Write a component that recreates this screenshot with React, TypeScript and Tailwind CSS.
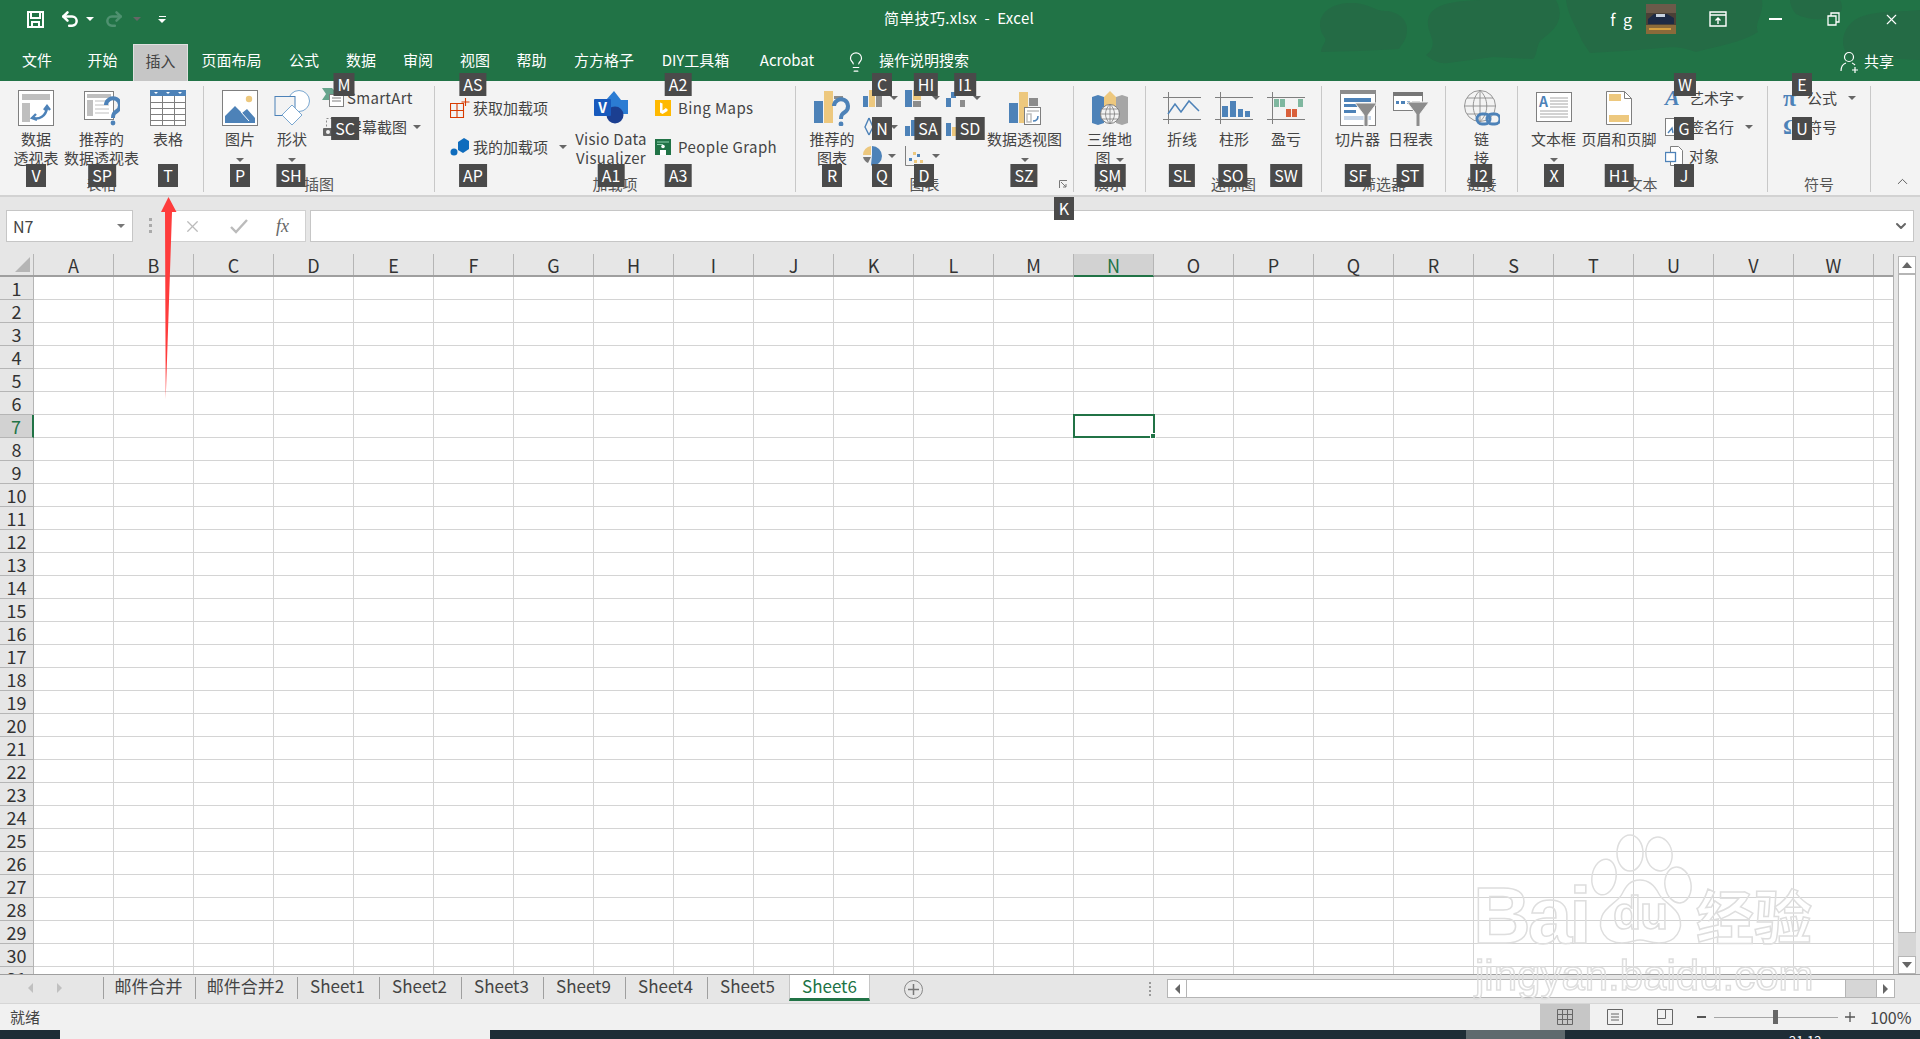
import type { ReactNode } from "react";
import { ChevronDown, ChevronUp, Lightbulb, Redo2, Undo2, X } from "lucide-react";

const BLUE = "#4d82b8";
const TAN = "#edc87e";
const GRAY = "#8c8c8c";
const LINE = "#7f7f7f";

const COLS = "ABCDEFGHIJKLMNOPQRSTUVWX".split("");
const ROWS = Array.from({ length: 31 }, (_, i) => i + 1);

const TABS = [
  { label: "文件", w: "w-[70px]" },
  { label: "开始", w: "w-[61px]" },
  { label: "插入", w: "w-[55px]", active: true },
  { label: "页面布局", w: "w-[87px]" },
  { label: "公式", w: "w-[58px]" },
  { label: "数据", w: "w-[56px]" },
  { label: "审阅", w: "w-[58px]" },
  { label: "视图", w: "w-[56px]" },
  { label: "帮助", w: "w-[57px]" },
  { label: "方方格子", w: "w-[88px]" },
  { label: "DIY工具箱", w: "w-[95px]" },
  { label: "Acrobat", w: "w-[88px]" },
];

const SHEETS = [
  { name: "邮件合并", w: "w-[92px]" },
  { name: "邮件合并2", w: "w-[102px]" },
  { name: "Sheet1", w: "w-[82px]" },
  { name: "Sheet2", w: "w-[82px]" },
  { name: "Sheet3", w: "w-[82px]" },
  { name: "Sheet9", w: "w-[82px]" },
  { name: "Sheet4", w: "w-[82px]" },
  { name: "Sheet5", w: "w-[82px]" },
];

// keytips float above the ribbon while Alt is held
const KEYTIPS = [
  { t: "M", c: "left-[344px] top-[73px]" },
  { t: "AS", c: "left-[473px] top-[73px]" },
  { t: "A2", c: "left-[678px] top-[73px]" },
  { t: "C", c: "left-[882px] top-[73px]" },
  { t: "HI", c: "left-[926px] top-[73px]" },
  { t: "I1", c: "left-[965px] top-[73px]" },
  { t: "W", c: "left-[1685px] top-[73px]" },
  { t: "E", c: "left-[1802px] top-[73px]" },
  { t: "SC", c: "left-[345px] top-[117px]" },
  { t: "N", c: "left-[882px] top-[117px]" },
  { t: "SA", c: "left-[928px] top-[117px]" },
  { t: "SD", c: "left-[970px] top-[117px]" },
  { t: "G", c: "left-[1684px] top-[117px]" },
  { t: "U", c: "left-[1802px] top-[117px]" },
  { t: "V", c: "left-[36px] top-[164px]" },
  { t: "SP", c: "left-[102px] top-[164px]" },
  { t: "T", c: "left-[168px] top-[164px]" },
  { t: "P", c: "left-[240px] top-[164px]" },
  { t: "SH", c: "left-[291px] top-[164px]" },
  { t: "AP", c: "left-[473px] top-[164px]" },
  { t: "A1", c: "left-[611px] top-[164px]" },
  { t: "A3", c: "left-[678px] top-[164px]" },
  { t: "R", c: "left-[832px] top-[164px]" },
  { t: "Q", c: "left-[882px] top-[164px]" },
  { t: "D", c: "left-[924px] top-[164px]" },
  { t: "SZ", c: "left-[1024px] top-[164px]" },
  { t: "SM", c: "left-[1110px] top-[164px]" },
  { t: "SL", c: "left-[1182px] top-[164px]" },
  { t: "SO", c: "left-[1233px] top-[164px]" },
  { t: "SW", c: "left-[1286px] top-[164px]" },
  { t: "SF", c: "left-[1358px] top-[164px]" },
  { t: "ST", c: "left-[1410px] top-[164px]" },
  { t: "I2", c: "left-[1481px] top-[164px]" },
  { t: "X", c: "left-[1554px] top-[164px]" },
  { t: "H1", c: "left-[1619px] top-[164px]" },
  { t: "J", c: "left-[1684px] top-[164px]" },
  { t: "K", c: "left-[1064px] top-[197px]" },
];

function Caret({ className = "" }: { className?: string }) {
  return (
    <span
      className={`inline-block h-0 w-0 border-x-[4px] border-t-[4px] border-x-transparent border-t-[#666] ${className}`}
    />
  );
}

function Ic({ w = 36, h = 36, children }: { w?: number; h?: number; children: ReactNode }) {
  return (
    <svg width={w} height={h} viewBox={`0 0 ${w} ${h}`} fill="none" className="shrink-0">
      {children}
    </svg>
  );
}

function Question({ x, y }: { x: number; y: number }) {
  return (
    <g transform={`translate(${x} ${y})`}>
      <path d="M2 7a7 7 0 1 1 11 6c-3 2-4 3-4 7" stroke={BLUE} strokeWidth="4" fill="none" />
      <circle cx="9" cy="25" r="2.4" fill={BLUE} />
    </g>
  );
}

function Funnel({ x, y }: { x: number; y: number }) {
  return <path transform={`translate(${x} ${y})`} d="M0 0h22L13 12v14h-4V12z" fill={GRAY} stroke="#f3f3f3" />;
}

function Big({
  w,
  lines,
  caret,
  inlineCaret,
  textClass = "",
  children,
}: {
  w: string;
  lines: string[];
  caret?: boolean;
  inlineCaret?: boolean;
  textClass?: string;
  children: ReactNode;
}) {
  return (
    <div className={`flex shrink-0 flex-col items-center ${w}`}>
      <div className="flex h-[43px] items-center justify-center">{children}</div>
      {lines.map((l, i) => (
        <div key={l} className={`h-[19px] whitespace-nowrap text-[15px] leading-[19px] ${textClass}`}>
          {l}
          {inlineCaret && i === lines.length - 1 && <Caret className="mb-[2px] ml-[5px]" />}
        </div>
      ))}
      {caret && (
        <div className="flex h-[21px] items-center pt-[2px]">
          <Caret />
        </div>
      )}
    </div>
  );
}

function Small({
  slot,
  icon,
  text,
  caretClass,
  textClass = "",
}: {
  slot: string;
  icon: ReactNode;
  text: string;
  caretClass?: string;
  textClass?: string;
}) {
  return (
    <div className="flex h-[24px] items-center whitespace-nowrap text-[15px]">
      <span className={`flex shrink-0 items-center ${slot}`}>{icon}</span>
      <span className={textClass}>{text}</span>
      {caretClass && <Caret className={caretClass} />}
    </div>
  );
}

function Group({
  w,
  label,
  labelClass = "",
  contentClass = "",
  children,
}: {
  w: string;
  label: string;
  labelClass?: string;
  contentClass?: string;
  children: ReactNode;
}) {
  return (
    <div className={`relative flex h-[106px] shrink-0 flex-col border-r border-[#c8c8c8] ${w}`}>
      <div className={`flex h-[93px] ${contentClass}`}>{children}</div>
      <div className={`text-center text-[15px] leading-[16px] text-[#555] ${labelClass}`}>{label}</div>
    </div>
  );
}

function ChartCell({ children }: { children: ReactNode }) {
  return (
    <div className="flex h-[24px] w-[41.5px] items-center">
      {children}
      <Caret className="ml-[5px]" />
    </div>
  );
}

function TitleBar() {
  return (
    <div className="relative h-[81px] shrink-0 overflow-hidden bg-[#217346] text-white">
      <svg className="absolute left-0 top-0" width="1920" height="81" fill="#246b45">
        <path d="M1320 25c0-15 15-23 35-22 15 1 20 8 30 8 12 0 22 8 22 18 0 12-5 14-8 20l-40 2-38 1c1-8 6-10 4-14-3-4-5-8-5-13z" />
        <path d="M1428 20c2-14 20-20 60-20h68c10 20-2 30-15 40-5 5-3 14-8 19l-40-2-45 6c-8 1-15-2-22-8 6-4 8-10 6-16-2-7-5-12-4-19z" />
        <path d="M1566 0h196c2 15-8 22-4 32-15 10-40 14-62 20-12-4-18-6-36-4-20 2-50 4-70 5l-8-12c-6-15-14-25-16-41z" />
        <path d="M1790 0h50c2 4 4 10-2 14-14 8-30 6-42 0-4-4-6-10-6-14z" />
        <path d="M1843 42c0-12 8-22 20-26 20-6 42-4 57-6v50l-40-2-30 2c-2-6-7-10-7-18z" />
      </svg>
      <div className="relative flex h-[43px] items-center pb-[5px]">
        <div className="flex items-center">
          <svg className="ml-[27px]" width="17" height="17" viewBox="0 0 17 17" fill="none" stroke="#fff" strokeWidth="2">
            <path d="M1 1h15v15H1z" />
            <path d="M4 1v6h9V1M5 16v-5h7v5" />
          </svg>
          <Undo2 className="ml-[16px]" size={20} strokeWidth={3} />
          <Caret className="ml-[6px] border-t-white" />
          <Redo2 className="ml-[10px] text-[#4f9170]" size={20} strokeWidth={3} />
          <Caret className="ml-[9px] border-t-[#4f9170]" />
          <span className="ml-[17px] flex flex-col items-center gap-[2px]">
            <span className="h-[1px] w-[7px] bg-white" />
            <Caret className="border-t-white" />
          </span>
        </div>
        <div className="absolute left-[884px] top-[8px] whitespace-nowrap text-[15px] leading-[20px] tracking-[0.3px]">
          简单技巧.xlsx&nbsp;&nbsp;-&nbsp;&nbsp;Excel
        </div>
        <div className="ml-auto flex items-center">
          <span className="text-[16px] tracking-[2px]">f g</span>
          <svg className="ml-[12px]" width="30" height="30" viewBox="0 0 30 30">
            <rect width="30" height="30" fill="#4a4036" />
            <rect width="30" height="9" fill="#6b5a4a" />
            <path d="M2 15l6-5h13l7 4v6H2z" fill="#1d2a45" />
            <rect x="10" y="10" width="9" height="3" fill="#c8d2e0" />
            <rect y="21" width="30" height="9" fill="#8a6a3a" />
            <rect x="3" y="24" width="22" height="2" fill="#d6a040" />
          </svg>
          <svg className="ml-[33px]" width="18" height="16" viewBox="0 0 18 16" fill="none" stroke="#fff" strokeWidth="1.4">
            <path d="M1 1h16v14H1zM1 4h16M9 13V7M6.500 9.500 9 7l2.500 2.500" />
          </svg>
          <span className="ml-[42px] h-[1.5px] w-[13px] bg-white" />
          <svg className="ml-[45px]" width="13" height="14" viewBox="0 0 13 14" fill="none" stroke="#fff" strokeWidth="1.3">
            <path d="M1 4h8v9H1zM4 4V1h8v9H9" />
          </svg>
          <X className="ml-[43px] mr-[20px]" size={17} strokeWidth={1.6} />
        </div>
      </div>
      <div className="relative flex h-[38px] items-center pb-[1px] pl-[2px] text-[15px]">
        {TABS.map((t) => (
          <div
            key={t.label}
            className={`flex h-full items-center justify-center pb-[2px] ${t.w} ${
              t.active ? "-mb-[1px] h-[38px] border-x border-t border-[#e0e0e0] bg-[#c6c6c6] text-[#444]" : ""
            }`}
          >
            {t.label}
          </div>
        ))}
        <Lightbulb className="ml-[14px] mr-[12px]" size={22} strokeWidth={1.3} />
        <span className="mb-[2px]">操作说明搜索</span>
        <svg className="ml-auto" width="20" height="22" viewBox="0 0 20 22" fill="none" stroke="#fff" strokeWidth="1.2">
          <circle cx="9" cy="6" r="4.500" />
          <path d="M1 20c0-5 2-7 5-8M12 12c1 .4 2 1 3 2M15 16v6M12 19h6" />
        </svg>
        <span className="ml-[4px] mr-[26px]">共享</span>
      </div>
    </div>
  );
}

function Ribbon() {
  return (
    <div className="flex h-[116px] shrink-0 border-b-2 border-[#d2d2d2] bg-[#f3f3f3] pt-[5px] text-[#444]">
      <Group w="w-[204px]" label="表格" contentClass="pl-[3px]">
        <Big w="w-[66px]" lines={["数据", "透视表"]}>
          <Ic>
            <rect x="0.500" y="0.500" width="35" height="35" fill="#fff" stroke={LINE} />
            <rect x="4" y="4" width="28" height="6" fill="#bfbfbf" />
            <rect x="4" y="13" width="8" height="19" fill="#bfbfbf" />
            <path d="M15 28c6 2 13-2 14-10M26 20l3-4 3 4M18 24l-4 4 5 2" stroke={BLUE} strokeWidth="2.400" />
          </Ic>
        </Big>
        <Big w="w-[65px]" lines={["推荐的", "数据透视表"]}>
          <Ic>
            <rect x="0.500" y="1.500" width="29" height="28" fill="#fff" stroke={LINE} />
            <rect x="3" y="4" width="24" height="4" fill="#bfbfbf" />
            <rect x="3" y="10" width="6" height="16" fill="#bfbfbf" />
            <path d="M11 11h14M11 15h14M11 19h14M11 23h14" stroke="#bfbfbf" />
            <Question x={20} y={8} />
          </Ic>
        </Big>
        <Big w="w-[68px]" lines={["表格"]}>
          <Ic>
            <rect x="0.500" y="0.500" width="35" height="35" fill="#fff" stroke={LINE} />
            <rect width="36" height="6" fill={BLUE} />
            <path d="M0.500 12.500h35M0.500 18.500h35M0.500 24.500h35M0.500 30.500h35M12.500 6v30M24.500 6v30" stroke={LINE} />
            <path d="M4 2l2 2 2-2zM16 2l2 2 2-2zM28 2l2 2 2-2z" fill="#fff" />
          </Ic>
        </Big>
      </Group>

      <Group w="w-[231px]" label="插图" contentClass="pl-[10px]">
        <Big w="w-[52px]" lines={["图片"]} caret>
          <Ic>
            <rect x="0.500" y="0.500" width="35" height="35" fill="#fff" stroke={LINE} />
            <circle cx="27" cy="9" r="3.200" fill={TAN} />
            <path d="M3 33V26l10-10 7 7 5-4 8 9v5z" fill={BLUE} />
            <path d="M19 22l8 9" stroke="#fff" />
          </Ic>
        </Big>
        <Big w="w-[52px]" lines={["形状"]} caret>
          <Ic>
            <circle cx="25" cy="11" r="10.500" fill="#fff" stroke="#7aa7d0" />
            <rect x="1" y="6.500" width="20" height="19" fill="#f3f3f3" stroke={BLUE} />
            <path d="M18 15l10 10-10 10-10-10z" fill="#fff" stroke="#7aa7d0" />
          </Ic>
        </Big>
        <div className="flex flex-col gap-[5px] pl-[4px]">
          <Small
            slot="w-[25px]"
            text="SmartArt"
            textClass="tracking-[0.3px]"
            icon={
              <Ic w={22} h={20}>
                <path d="M0 0h10l6 6-6 6H0l4-6z" fill="#66a48c" />
                <rect x="7.500" y="6.500" width="14" height="12" fill="#fff" stroke={LINE} />
                <path d="M10 10h9M10 13h9" stroke={LINE} />
              </Ic>
            }
          />
          <Small
            slot="w-[25px]"
            text="屏幕截图"
            caretClass="ml-[6px]"
            icon={
              <Ic w={22} h={20}>
                <rect x="4.500" y="1.500" width="14" height="12" stroke={GRAY} strokeDasharray="2 2" />
                <rect x="1" y="11" width="10" height="8" rx="1" fill="#666" />
                <circle cx="6" cy="15" r="2" fill="#f3f3f3" />
              </Ic>
            }
          />
        </div>
      </Group>

      <Group w="w-[361px]" label="加载项" contentClass="pl-[15px]">
        <div className="flex w-[121px] shrink-0 flex-col gap-[15px] pt-[10px]">
          <Small
            slot="w-[23px]"
            text="获取加载项"
            icon={
              <Ic w={20} h={20}>
                <path d="M0.500 5.500h13v14h-13zM0.500 12.500h13M7 5.500v14" stroke="#d83b01" strokeWidth="1.100" />
                <path d="M15.500 0v8M11.500 4h8" stroke="#d83b01" strokeWidth="1.100" />
              </Ic>
            }
          />
          <Small
            slot="w-[23px]"
            text="我的加载项"
            caretClass="ml-[11px]"
            icon={
              <Ic w={20} h={20}>
                <path d="M8 5l6-4 5 3v8l-6 4-5-3z" fill="#0f6cbd" />
                <circle cx="4" cy="15" r="3.500" fill="#0f6cbd" />
              </Ic>
            }
          />
        </div>
        <Big w="w-[80px]" lines={["Visio Data", "Visualizer"]} textClass="tracking-[0.3px]">
          <Ic>
            <path d="M13 10l8-9 7 9h7v14h-7l-6 6-9-6z" fill="#2b7cd3" />
            <circle cx="22" cy="25" r="8.500" fill="#1b3f91" />
            <rect x="1" y="9" width="17" height="17" rx="1" fill="#185abd" />
            <text x="9.500" y="23" textAnchor="middle" fill="#fff" fontSize="14" fontWeight="700">
              V
            </text>
          </Ic>
        </Big>
        <div className="ml-[4px] flex flex-col gap-[15px] pt-[10px]">
          <Small
            slot="w-[23px]"
            text="Bing Maps"
            textClass="tracking-[0.4px]"
            icon={
              <Ic w={16} h={16}>
                <rect width="16" height="16" fill="#ffb900" />
                <path d="M5 2.500l2.500 1v7l3-2-1.500-1 3.500 1.500v2L7.500 14 5 12.500z" fill="#fff" />
              </Ic>
            }
          />
          <Small
            slot="w-[23px]"
            text="People Graph"
            textClass="tracking-[0.4px]"
            icon={
              <Ic w={16} h={16}>
                <rect width="16" height="16" fill="#217346" />
                <path d="M2 3h12M2 5.500h6" stroke="#8fd0ae" />
                <circle cx="8" cy="7.500" r="1.800" fill="#fff" />
                <path d="M5 16v-5h6v5z" fill="#fff" />
              </Ic>
            }
          />
        </div>
      </Group>

      <Group w="w-[278px]" label="图表" labelClass="pr-[20px]" contentClass="pl-[5px]">
        <Big w="w-[62px]" lines={["推荐的", "图表"]}>
          <Ic>
            <rect x="0" y="11" width="9" height="22" fill={BLUE} />
            <rect x="10" y="1" width="9" height="32" fill={TAN} />
            <rect x="20" y="6" width="9" height="3" fill={GRAY} />
            <Question x={18} y={9} />
          </Ic>
        </Big>
        <div className="flex flex-col gap-[5px]">
          <div className="flex">
            <ChartCell>
              <Ic w={22} h={20}>
                <rect y="8" width="5" height="11" fill={BLUE} />
                <rect x="6" y="2" width="6" height="17" fill={TAN} />
                <rect x="13" y="6" width="6" height="13" fill={GRAY} />
              </Ic>
            </ChartCell>
            <ChartCell>
              <Ic w={22} h={20}>
                <rect y="2" width="7" height="17" fill={BLUE} />
                <rect x="8" y="2" width="8" height="10" fill={TAN} />
                <rect x="8" y="13" width="8" height="6" fill={GRAY} />
              </Ic>
            </ChartCell>
            <ChartCell>
              <Ic w={22} h={20}>
                <rect y="10" width="5" height="9" fill={BLUE} />
                <rect x="5" y="4" width="5" height="6" fill={BLUE} />
                <rect x="14" y="12" width="5" height="7" fill={GRAY} />
              </Ic>
            </ChartCell>
          </div>
          <div className="flex">
            <ChartCell>
              <Ic w={22} h={20}>
                <path d="M6 1l-4 9 4 8M6 1l4 9-4 8" stroke={BLUE} strokeWidth="1.400" />
              </Ic>
            </ChartCell>
            <ChartCell>
              <Ic w={22} h={20}>
                <rect y="9" width="5" height="10" fill={BLUE} />
                <rect x="6" y="3" width="5" height="16" fill={BLUE} />
              </Ic>
            </ChartCell>
            <ChartCell>
              <Ic w={22} h={20}>
                <rect y="6" width="5" height="13" fill={BLUE} />
                <rect x="6" y="10" width="5" height="9" fill={TAN} />
              </Ic>
            </ChartCell>
          </div>
          <div className="flex">
            <ChartCell>
              <Ic w={20} h={20}>
                <path d="M9 9V0a10 10 0 0 1 0 20l-1-1z" fill={BLUE} />
                <path d="M8 9V0a9 9 0 0 0-8 9z" fill={TAN} />
                <path d="M0 11h8l-3 6a9 9 0 0 1-5-6z" fill="#777" />
              </Ic>
            </ChartCell>
            <ChartCell>
              <Ic w={22} h={20}>
                <path d="M0.500 0v19.500H20" stroke={LINE} />
                <path d="M4 12h3v3H4zM12 8h3v3h-3z" fill={BLUE} />
                <path d="M8 6h3v3H8zM9 14h3v3H9zM15 14h3v3h-3z" fill={TAN} />
              </Ic>
            </ChartCell>
          </div>
        </div>
        <Big w="w-[74px]" lines={["数据透视图"]} caret>
          <Ic w={32} h={36}>
            <rect x="0" y="13" width="9" height="20" fill={BLUE} />
            <rect x="10" y="2" width="9" height="31" fill={TAN} />
            <rect x="20" y="8" width="9" height="8" fill={GRAY} />
            <rect x="15.500" y="17.500" width="16" height="17" fill="#fff" stroke={LINE} />
            <path d="M18 21h12M18 24h4v8h-4z" stroke="#bfbfbf" strokeWidth="1.500" />
            <path d="M24 31c3 0 5-2 5-5" stroke={BLUE} strokeWidth="1.500" />
          </Ic>
        </Big>
        <svg className="absolute bottom-[3px] left-[263px]" width="9" height="9" viewBox="0 0 9 9" fill="none" stroke="#777">
          <path d="M0.500 8V0.500H8M2 2l5 5M7 4v3H4" />
        </svg>
      </Group>

      <Group w="w-[72px]" label="演示">
        <Big w="w-[71px]" lines={["三维地", "图"]} inlineCaret>
          <Ic>
            <path d="M0 7l6-2v30l-6-2zM6 5l6 2v26l-6 2z" fill={BLUE} />
            <path d="M12 7l6-6 6 6v12H12z" fill={TAN} />
            <path d="M24 7l6-2 6 2v26l-6 2-6-2z" fill="#a6a6a6" />
            <circle cx="18" cy="24" r="9.500" fill="#f3f3f3" stroke={LINE} />
            <path d="M9 24h18M18 14.500v19M18 14.500c-6 5-6 14 0 19M18 14.500c6 5 6 14 0 19M10.500 19h15M10.500 29h15" stroke={LINE} strokeWidth="0.800" />
          </Ic>
        </Big>
      </Group>

      <Group w="w-[176px]" label="迷你图" contentClass="pl-[10px]">
        <Big w="w-[52px]" lines={["折线"]}>
          <Ic w={38} h={32}>
            <path d="M0 5.500h38M0 27.500h38M5.500 0v32" stroke={LINE} />
            <path d="M5 22l7-10 6 8 8-11 10 10" stroke={BLUE} strokeWidth="1.500" />
          </Ic>
        </Big>
        <Big w="w-[52px]" lines={["柱形"]}>
          <Ic w={38} h={32}>
            <path d="M0 5.500h38M0 27.500h38M5.500 0v32" stroke={LINE} />
            <rect x="7" y="14" width="6" height="11" fill={BLUE} />
            <rect x="15" y="9" width="6" height="16" fill={BLUE} />
            <rect x="23" y="17" width="5" height="8" fill={BLUE} />
            <rect x="30" y="19" width="5" height="6" fill={BLUE} />
          </Ic>
        </Big>
        <Big w="w-[52px]" lines={["盈亏"]}>
          <Ic w={38} h={32}>
            <path d="M0 5.500h38M0 27.500h38M5.500 0v32" stroke={LINE} />
            <rect x="7" y="7" width="5" height="8" fill="#7fb79f" />
            <rect x="13" y="7" width="5" height="8" fill="#7fb79f" />
            <rect x="19" y="17" width="5" height="8" fill="#d9603b" />
            <rect x="25" y="17" width="5" height="8" fill="#d9603b" />
            <rect x="31" y="7" width="5" height="8" fill="#7fb79f" />
          </Ic>
        </Big>
      </Group>

      <Group w="w-[124px]" label="筛选器" contentClass="pl-[9px]">
        <Big w="w-[53px]" lines={["切片器"]}>
          <Ic>
            <rect x="0.500" y="0.500" width="35" height="35" fill="#fff" stroke={LINE} />
            <rect width="36" height="4" fill={GRAY} />
            <rect x="4" y="8" width="27" height="4" fill={BLUE} />
            <rect x="4" y="14" width="16" height="3" fill={BLUE} />
            <rect x="4" y="20" width="12" height="3" fill={BLUE} />
            <rect x="4" y="26" width="27" height="4" fill="#c5d5e8" />
            <Funnel x={15} y={13} />
          </Ic>
        </Big>
        <Big w="w-[53px]" lines={["日程表"]}>
          <Ic>
            <rect x="0.500" y="2.500" width="29" height="18" fill="#fff" stroke={LINE} />
            <rect y="2" width="30" height="4" fill="#777" />
            <path d="M3 11h3v3H3zM8 11h4v3H8zM14 11h3v3h-3z" fill={BLUE} />
            <path d="M19 11h8v3h-8z" fill="#bfbfbf" />
            <Funnel x={14} y={12} />
          </Ic>
        </Big>
      </Group>

      <Group w="w-[72px]" label="链接">
        <Big w="w-[71px]" lines={["链", "接"]}>
          <Ic>
            <g stroke={GRAY} strokeWidth="0.900">
              <circle cx="16" cy="16" r="15.500" fill="#f3f3f3" />
              <path d="M0.500 16h31M16 0.500v31M16 0.500c-9 8-9 23 0 31M16 0.500c9 8 9 23 0 31M3 8h26M3 24h26" />
            </g>
            <rect x="13" y="24" width="13" height="10" rx="5" fill="none" stroke={BLUE} strokeWidth="3" />
            <rect x="23" y="24" width="13" height="10" rx="5" fill="none" stroke={BLUE} strokeWidth="3" />
          </Ic>
        </Big>
      </Group>

      <Group w="w-[250px]" label="文本" contentClass="pl-[2px]">
        <Big w="w-[67px]" lines={["文本框"]} caret>
          <Ic>
            <rect x="0.500" y="2.500" width="35" height="29" fill="#fff" stroke={LINE} />
            <text x="3" y="17" fill={BLUE} fontSize="14" fontWeight="700">
              A
            </text>
            <path d="M14 8h18M14 11h18M14 14h18M14 17h18M4 21h28M4 24h28M4 27h28" stroke="#a6a6a6" />
          </Ic>
        </Big>
        <Big w="w-[64px]" lines={["页眉和页脚"]}>
          <Ic w={26} h={34}>
            <path d="M0.500 0.500h18l7 7v26h-25z" fill="#fff" stroke={LINE} />
            <path d="M18.500 0.500v7h7" stroke={LINE} />
            <rect x="3" y="3" width="12" height="7" fill={TAN} />
            <rect x="3" y="24" width="20" height="7" fill={TAN} />
          </Ic>
        </Big>
        <div className="ml-[14px] flex flex-col gap-[5px]">
          <Small
            slot="w-[24px]"
            text="艺术字"
            caretClass="ml-[2px]"
            icon={<span className="font-['Liberation_Serif',serif] text-[22px] font-bold italic leading-[24px] text-[#4d82b8]">A</span>}
          />
          <Small
            slot="w-[24px]"
            text="签名行"
            caretClass="ml-[11px]"
            icon={
              <Ic w={20} h={20}>
                <rect x="0.500" y="1.500" width="16" height="17" fill="#fff" stroke={LINE} />
                <path d="M3 16l4-5 1 5" stroke={BLUE} strokeWidth="1.400" />
              </Ic>
            }
          />
          <Small
            slot="w-[24px]"
            text="对象"
            icon={
              <Ic w={18} h={20}>
                <path d="M5.500 0.500h8l4 4v15h-12z" fill="#fff" stroke={LINE} />
                <rect x="0.500" y="6.500" width="10" height="9" fill="#fff" stroke={BLUE} strokeWidth="1.300" />
              </Ic>
            }
          />
        </div>
      </Group>

      <Group w="w-[103px]" label="符号" contentClass="pl-[15px]">
        <div className="flex flex-col gap-[5px]">
          <Small
            slot="w-[24px]"
            text="公式"
            caretClass="ml-[11px]"
            icon={<span className="font-['Liberation_Serif',serif] text-[24px] font-bold leading-[24px] text-[#4d82b8]">π</span>}
          />
          <Small
            slot="w-[24px]"
            text="符号"
            icon={<span className="font-['Liberation_Serif',serif] text-[22px] font-bold leading-[24px] text-[#4d82b8]">Ω</span>}
          />
        </div>
      </Group>

      <div className="flex flex-1 items-end justify-center pb-[5px] pl-[14px]">
        <ChevronUp size={17} strokeWidth={1.2} />
      </div>
    </div>
  );
}

function FormulaBar() {
  return (
    <div className="flex h-[57px] shrink-0 items-start bg-[#e6e6e6] pt-[13px] text-[#444]">
      <div className="ml-[6px] flex h-[32px] w-[127px] items-center justify-between border border-[#c6c6c6] bg-white pl-[6px] pr-[7px] text-[16px]">
        N7
        <Caret className="border-t-[#777]" />
      </div>
      <div className="ml-[16px] mt-[8px] flex w-[5px] flex-col gap-[3px]">
        <span className="h-[3px] w-[3px] bg-[#aaa]" />
        <span className="h-[3px] w-[3px] bg-[#aaa]" />
        <span className="h-[3px] w-[3px] bg-[#aaa]" />
      </div>
      <div className="ml-[16px] flex h-[32px] w-[136px] items-center border border-[#d0d0d0] bg-white">
        <X className="ml-[12px] text-[#bbb]" size={19} strokeWidth={1.6} />
        <svg className="ml-[28px]" width="18" height="15" viewBox="0 0 18 15" fill="none" stroke="#bbb" strokeWidth="2.400">
          <path d="M1 8l5 5L17 1" />
        </svg>
        <span className="ml-[28px] font-['Liberation_Serif',serif] text-[18px] italic leading-none text-[#666]">fx</span>
      </div>
      <div className="ml-[4px] flex h-[32px] w-[1604px] items-center justify-end border border-[#c6c6c6] bg-white pr-[4px]">
        <ChevronDown size={16} strokeWidth={3} className="text-[#666]" />
      </div>
    </div>
  );
}

function Sheet() {
  return (
    <div className="flex h-[720px] shrink-0 bg-[#e6e6e6]">
      <div className="w-[1894px] shrink-0 overflow-hidden border-r border-[#b0b0b0] bg-white">
        <div className="flex h-[23px] border-b-2 border-[#9f9f9f] bg-[#e6e6e6]">
          <div className="flex w-[34px] shrink-0 items-end justify-end border-r border-[#b5b5b5] pb-[3px] pr-[3px]">
            <span className="h-0 w-0 border-b-[15px] border-l-[15px] border-b-[#b5b5b5] border-l-transparent" />
          </div>
          {COLS.map((c) => (
            <div
              key={c}
              className={`flex w-[80px] shrink-0 items-center justify-center border-r border-[#b5b5b5] text-[18px] leading-none ${
                c === "N" ? "-mb-[2px] border-b-2 border-b-[#217346] bg-[#d2d2d2] text-[#217346]" : "text-[#333]"
              }`}
            >
              {c}
            </div>
          ))}
        </div>
        {ROWS.map((r) => (
          <div key={r} className="flex h-[23px]">
            <div
              className={`flex w-[34px] shrink-0 items-center justify-center border-b border-r text-[18px] leading-none ${
                r === 7
                  ? "border-b-[#b5b5b5] border-r-2 border-r-[#217346] bg-[#d2d2d2] text-[#217346]"
                  : "border-[#b5b5b5] bg-[#e6e6e6] text-[#333]"
              }`}
            >
              {r}
            </div>
            {COLS.map((c) => (
              <div key={c} className="relative w-[80px] shrink-0 border-b border-r border-[#d4d4d4]">
                {r === 7 && c === "N" && (
                  <div className="absolute -left-[1px] -top-[1px] z-10 h-[24px] w-[82px] border-2 border-[#217346]">
                    <span className="absolute -bottom-[3px] -right-[3px] h-[6px] w-[6px] border border-white bg-[#217346]" />
                  </div>
                )}
              </div>
            ))}
          </div>
        ))}
      </div>
      <div className="flex flex-1 flex-col px-[4px] pt-[2px]">
        <div className="flex h-[18px] items-center justify-center border border-[#b5b5b5] bg-white">
          <span className="h-0 w-0 border-x-[5px] border-b-[6px] border-x-transparent border-b-[#666]" />
        </div>
        <div className="h-[659px] border border-[#b5b5b5] bg-white" />
        <div className="h-[23px] bg-[#d6d6d6]" />
        <div className="flex h-[18px] items-center justify-center border border-[#b5b5b5] bg-white">
          <span className="h-0 w-0 border-x-[5px] border-t-[6px] border-x-transparent border-t-[#666]" />
        </div>
      </div>
    </div>
  );
}

function SheetTabs() {
  return (
    <div className="flex h-[29px] shrink-0 items-start border-t border-[#9f9f9f] bg-[#e6e6e6] text-[17px] leading-none text-[#444]">
      <div className="flex h-full w-[103px] shrink-0 items-center pb-[2px] pl-[28px]">
        <span className="h-0 w-0 border-y-[5px] border-r-[5px] border-y-transparent border-r-[#c0c0c0]" />
        <span className="ml-[24px] h-0 w-0 border-y-[5px] border-l-[5px] border-y-transparent border-l-[#c0c0c0]" />
      </div>
      {SHEETS.map((s) => (
        <div key={s.name} className={`mt-[2px] flex h-[22px] shrink-0 items-center justify-center border-l border-[#9f9f9f] pb-[5px] pr-[2px] ${s.w}`}>
          {s.name}
        </div>
      ))}
      <div className="flex h-[26px] w-[81px] shrink-0 items-center justify-center border-b-[3px] border-x border-b-[#217346] border-x-[#c6c6c6] bg-white pb-[2px] text-[#217346]">
        Sheet6
      </div>
      <div className="ml-[34px] mt-[5px] flex h-[19px] w-[19px] shrink-0 items-center justify-center rounded-full border border-[#888] text-[#777]">
        <svg width="11" height="11" viewBox="0 0 11 11" stroke="#777" strokeWidth="1.500">
          <path d="M5.500 0v11M0 5.500h11" />
        </svg>
      </div>
      <div className="ml-[226px] mt-[7px] flex flex-col gap-[2px]">
        <span className="h-[2px] w-[2px] bg-[#999]" />
        <span className="h-[2px] w-[2px] bg-[#999]" />
        <span className="h-[2px] w-[2px] bg-[#999]" />
        <span className="h-[2px] w-[2px] bg-[#999]" />
      </div>
      <div className="ml-[16px] mt-[4px] flex h-[19px] w-[728px] shrink-0 border border-[#b5b5b5]">
        <div className="flex w-[19px] items-center justify-center border-r border-[#b5b5b5] bg-white">
          <span className="h-0 w-0 border-y-[5px] border-r-[5px] border-y-transparent border-r-[#666]" />
        </div>
        <div className="w-[659px] border-r border-[#b5b5b5] bg-white" />
        <div className="flex-1 bg-[#d6d6d6]" />
        <div className="flex w-[18px] items-center justify-center border-l border-[#b5b5b5] bg-white">
          <span className="h-0 w-0 border-y-[5px] border-l-[5px] border-y-transparent border-l-[#666]" />
        </div>
      </div>
    </div>
  );
}

function StatusBar() {
  return (
    <div className="flex h-[27px] shrink-0 items-center border-t border-[#d6d6d6] bg-[#f1f1f1] pl-[10px] text-[15px] text-[#444]">
      <span>就绪</span>
      <div className="ml-[1500px] flex h-full w-[50px] shrink-0 items-center justify-center bg-[#c6c6c6]">
        <svg width="16" height="16" viewBox="0 0 16 16" fill="none" stroke="#666">
          <path d="M0.500 0.500h15v15h-15zM0.500 5.500h15M0.500 10.500h15M5.500 0.500v15M10.500 0.500v15" />
        </svg>
      </div>
      <div className="flex w-[50px] shrink-0 justify-center">
        <svg width="16" height="16" viewBox="0 0 16 16" fill="none" stroke="#666">
          <path d="M0.500 0.500h15v15h-15zM4 5h8M4 8h8M4 11h8" />
        </svg>
      </div>
      <div className="flex w-[50px] shrink-0 justify-center">
        <svg width="16" height="16" viewBox="0 0 16 16" fill="none" stroke="#666">
          <path d="M0.500 0.500h15v15h-15zM0.500 9.500h8V0.500" />
        </svg>
      </div>
      <span className="ml-[7px] h-[1.5px] w-[9px] bg-[#555]" />
      <div className="relative ml-[8px] flex h-[14px] w-[124px] items-center">
        <span className="h-[1px] w-full bg-[#a6a6a6]" />
        <span className="absolute left-[59px] h-[14px] w-[5px] bg-[#666]" />
      </div>
      <svg className="ml-[7px]" width="10" height="10" viewBox="0 0 10 10" stroke="#555" strokeWidth="1.300">
        <path d="M5 0v10M0 5h10" />
      </svg>
      <span className="ml-[15px] whitespace-nowrap text-[16px]">100%</span>
    </div>
  );
}

function TaskBar() {
  return (
    <div className="relative flex h-[9px] shrink-0 overflow-hidden bg-[#1e2d36]">
      <div className="ml-[60px] w-[430px] bg-[#f0f0f0]" />
      <div className="ml-[976px] w-[99px] bg-[#5f6a6e]" />
      <span className="absolute left-[1789px] top-[4px] text-[13px] leading-[14px] text-white">21:12</span>
    </div>
  );
}

function Keytips() {
  return (
    <>
      {KEYTIPS.map((k) => (
        <div
          key={k.t}
          className={`absolute flex h-[23px] min-w-[20px] -translate-x-1/2 items-center justify-center bg-[#4a4a4a] px-[4px] pb-[2px] text-[16px] leading-none text-white ${k.c}`}
        >
          {k.t}
        </div>
      ))}
    </>
  );
}

function RedArrow() {
  return (
    <svg className="absolute left-[155px] top-[195px]" width="30" height="206" viewBox="0 0 30 206">
      <path d="M13.500 2l8 15h-4.500l-6.300 187-0.700-187H6z" fill="#fe3c3c" />
    </svg>
  );
}

function Watermark() {
  const outline = "text-transparent [-webkit-text-stroke:1.5px_#dedede]";
  return (
    <div className="absolute left-[1470px] top-[832px] h-[170px] w-[350px] blur-[0.3px]">
      <span className={`absolute left-[3px] top-[38px] font-['Liberation_Sans',sans-serif] text-[80px] font-bold leading-[92px] tracking-[-3px] ${outline}`}>
        Bai
      </span>
      <svg className="absolute left-0 top-0" width="350" height="170" fill="none" stroke="#dedede" strokeWidth="1.500">
        <ellipse cx="134" cy="45" rx="12" ry="18" transform="rotate(10 134 45)" />
        <ellipse cx="160" cy="21" rx="13" ry="18" />
        <ellipse cx="189" cy="22" rx="13" ry="17" transform="rotate(-10 189 22)" />
        <ellipse cx="208" cy="53" rx="13" ry="18" transform="rotate(-10 208 53)" />
        <path d="M170 48c-10 0-14 6-18 14-4 8-16 12-20 22-5 13 3 27 20 27 9 0 12-3 18-3s10 3 19 3c17 0 25-14 20-27-4-10-16-14-20-22-4-8-9-14-19-14z" />
      </svg>
      <span className={`absolute left-[143px] top-[54px] font-['Liberation_Sans',sans-serif] text-[46px] font-bold leading-[54px] tracking-[-1px] ${outline}`}>
        du
      </span>
      <span className={`absolute left-[226px] top-[47px] whitespace-nowrap font-['Noto_Sans_CJK_SC',sans-serif] text-[58px] font-bold leading-[70px] ${outline}`}>
        经验
      </span>
      <span className={`absolute left-[5px] top-[120px] whitespace-nowrap font-['Liberation_Sans',sans-serif] text-[42px] leading-[48px] ${outline}`}>
        jingyan.baidu.com
      </span>
    </div>
  );
}

export default function App() {
  return (
    <div className="relative flex h-[1039px] w-[1920px] flex-col overflow-hidden bg-white font-['Noto_Sans_CJK_SC','Noto_Sans',sans-serif]">
      <TitleBar />
      <Ribbon />
      <FormulaBar />
      <Sheet />
      <SheetTabs />
      <StatusBar />
      <TaskBar />
      <Keytips />
      <RedArrow />
      <Watermark />
    </div>
  );
}
